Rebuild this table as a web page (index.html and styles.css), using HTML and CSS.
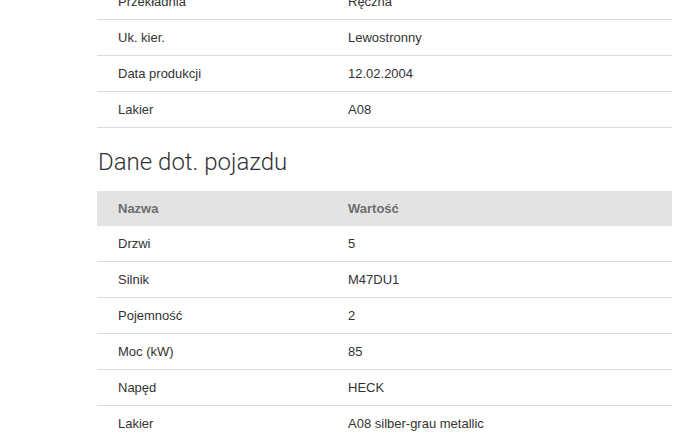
FILE: index.html
```html
<!DOCTYPE html>
<html lang="pl">
<head>
    <meta charset="UTF-8">
    <meta name="viewport" content="width=device-width, initial-scale=1.0">
    <title>Dane pojazdu</title>
    <link rel="stylesheet" href="styles.css">
</head>
<body>
    <div class="container">
        <table class="data-table">
            <tbody>
                <tr><td>Przekładnia</td><td>Ręczna</td></tr>
                <tr><td>Uk. kier.</td><td>Lewostronny</td></tr>
                <tr><td>Data produkcji</td><td>12.02.2004</td></tr>
                <tr><td>Lakier</td><td>A08</td></tr>
            </tbody>
        </table>

        <h2>Dane dot. pojazdu</h2>
        <table class="data-table">
            <thead>
                <tr><th>Nazwa</th><th>Wartość</th></tr>
            </thead>
            <tbody>
                <tr><td>Drzwi</td><td>5</td></tr>
                <tr><td>Silnik</td><td>M47DU1</td></tr>
                <tr><td>Pojemność</td><td>2</td></tr>
                <tr><td>Moc (kW)</td><td>85</td></tr>
                <tr><td>Napęd</td><td>HECK</td></tr>
                <tr><td>Lakier</td><td>A08 silber-grau metallic</td></tr>
            </tbody>
        </table>
    </div>
</body>
</html>
```

FILE: styles.css
```css
body {
    font-family: "Liberation Sans", Arial, sans-serif;
    font-size: 13px;
    color: #333;
    margin: 0;
    padding: 0;
    background-color: #fff;
}
.container {
    width: 575px;
    margin: -16px 0 0 97px;
}
h2 {
    font-family: Roboto, "Liberation Sans", sans-serif;
    font-weight: 300;
    font-size: 24px;
    line-height: 1.1;
    color: #333;
    margin: 21px 0 16px 1px;
}
.data-table {
    width: 100%;
    border-collapse: collapse;
}
.data-table th,
.data-table td {
    text-align: left;
    padding: 8px 20px 8px 21px;
    line-height: 19px;
}
.data-table th:first-child,
.data-table td:first-child {
    width: 40%;
}
.data-table thead th {
    background-color: #e3e3e3;
    color: #6e6e6e;
    font-weight: bold;
}
.data-table tbody tr {
    border-bottom: 1px solid #dcdcdc;
}
```
